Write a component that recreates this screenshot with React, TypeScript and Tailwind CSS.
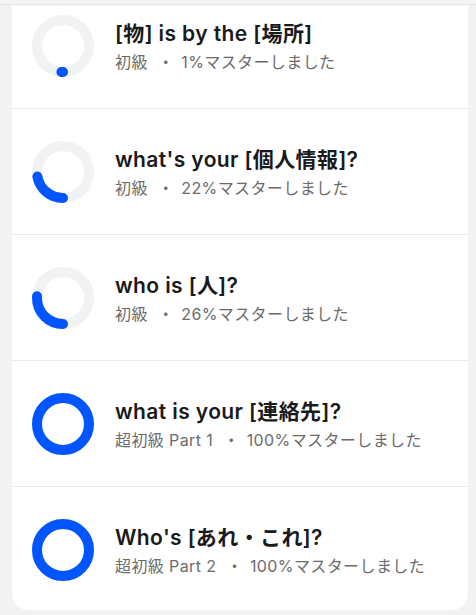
import React from 'react';

type Lesson = {
  title: string;
  level: string;
  progress: number;
};

const lessons: Lesson[] = [
  { title: '[物] is by the [場所]', level: '初級', progress: 1 },
  { title: "what's your [個人情報]?", level: '初級', progress: 22 },
  { title: 'who is [人]?', level: '初級', progress: 26 },
  { title: 'what is your [連絡先]?', level: '超初級 Part 1', progress: 100 },
  { title: "Who's [あれ・これ]?", level: '超初級 Part 2', progress: 100 },
];

const ProgressRing: React.FC<{ value: number }> = ({ value }) => {
  const r = 26;
  const c = 2 * Math.PI * r;
  const len = (value / 100) * c;
  return (
    <svg width="62" height="62" viewBox="0 0 62 62" className="shrink-0">
      <circle cx="31" cy="31" r={r} fill="none" stroke="#f1f2f4" strokeWidth="10" />
      {value >= 100 ? (
        <circle cx="31" cy="31" r={r} fill="none" stroke="#0055ff" strokeWidth="10" />
      ) : (
        <circle
          cx="31"
          cy="31"
          r={r}
          fill="none"
          stroke="#0055ff"
          strokeWidth="10"
          strokeLinecap="round"
          strokeDasharray={`${len} ${c}`}
          transform="rotate(90 31 31)"
        />
      )}
    </svg>
  );
};

export default function App() {
  return (
    <div
      className="w-[476px] h-[615px] flex flex-col overflow-hidden bg-[#f2f2f2] select-none"
      style={{ fontFamily: 'Inter, "Noto Sans CJK JP", sans-serif' }}
    >
      <div className="h-[5px] shrink-0 bg-[#f4f4f4] border-b border-[#e3e3e3]" />

      <div className="flex-1 overflow-hidden">
        <div className="-mt-[22px] ml-[12px] mr-[8px] bg-white rounded-[16px]">
          {lessons.map((l, i) => {
            const last = i === lessons.length - 1;
            return (
              <div
                key={l.title}
                className={
                  last
                    ? 'h-[123px] pt-[32px] pl-[20px]'
                    : 'h-[126px] pt-[32px] pl-[20px] border-b border-[#ebebeb]'
                }
              >
                <div className="flex items-center gap-[21px]">
                  <ProgressRing value={l.progress} />
                  <div className="flex flex-col">
                    <span className="text-[21px] leading-[26px] font-semibold tracking-[0.4px] text-[#1a1a1a] whitespace-nowrap">
                      {l.title}
                    </span>
                    <span className="mt-[5px] text-[16px] leading-[20px] tracking-[0.4px] text-[#6b6b6b] whitespace-nowrap">
                      {l.level}
                      <span className="pl-[10px] pr-[7px]">・</span>
                      {l.progress}%マスターしました
                    </span>
                  </div>
                </div>
              </div>
            );
          })}
        </div>
      </div>
    </div>
  );
}
